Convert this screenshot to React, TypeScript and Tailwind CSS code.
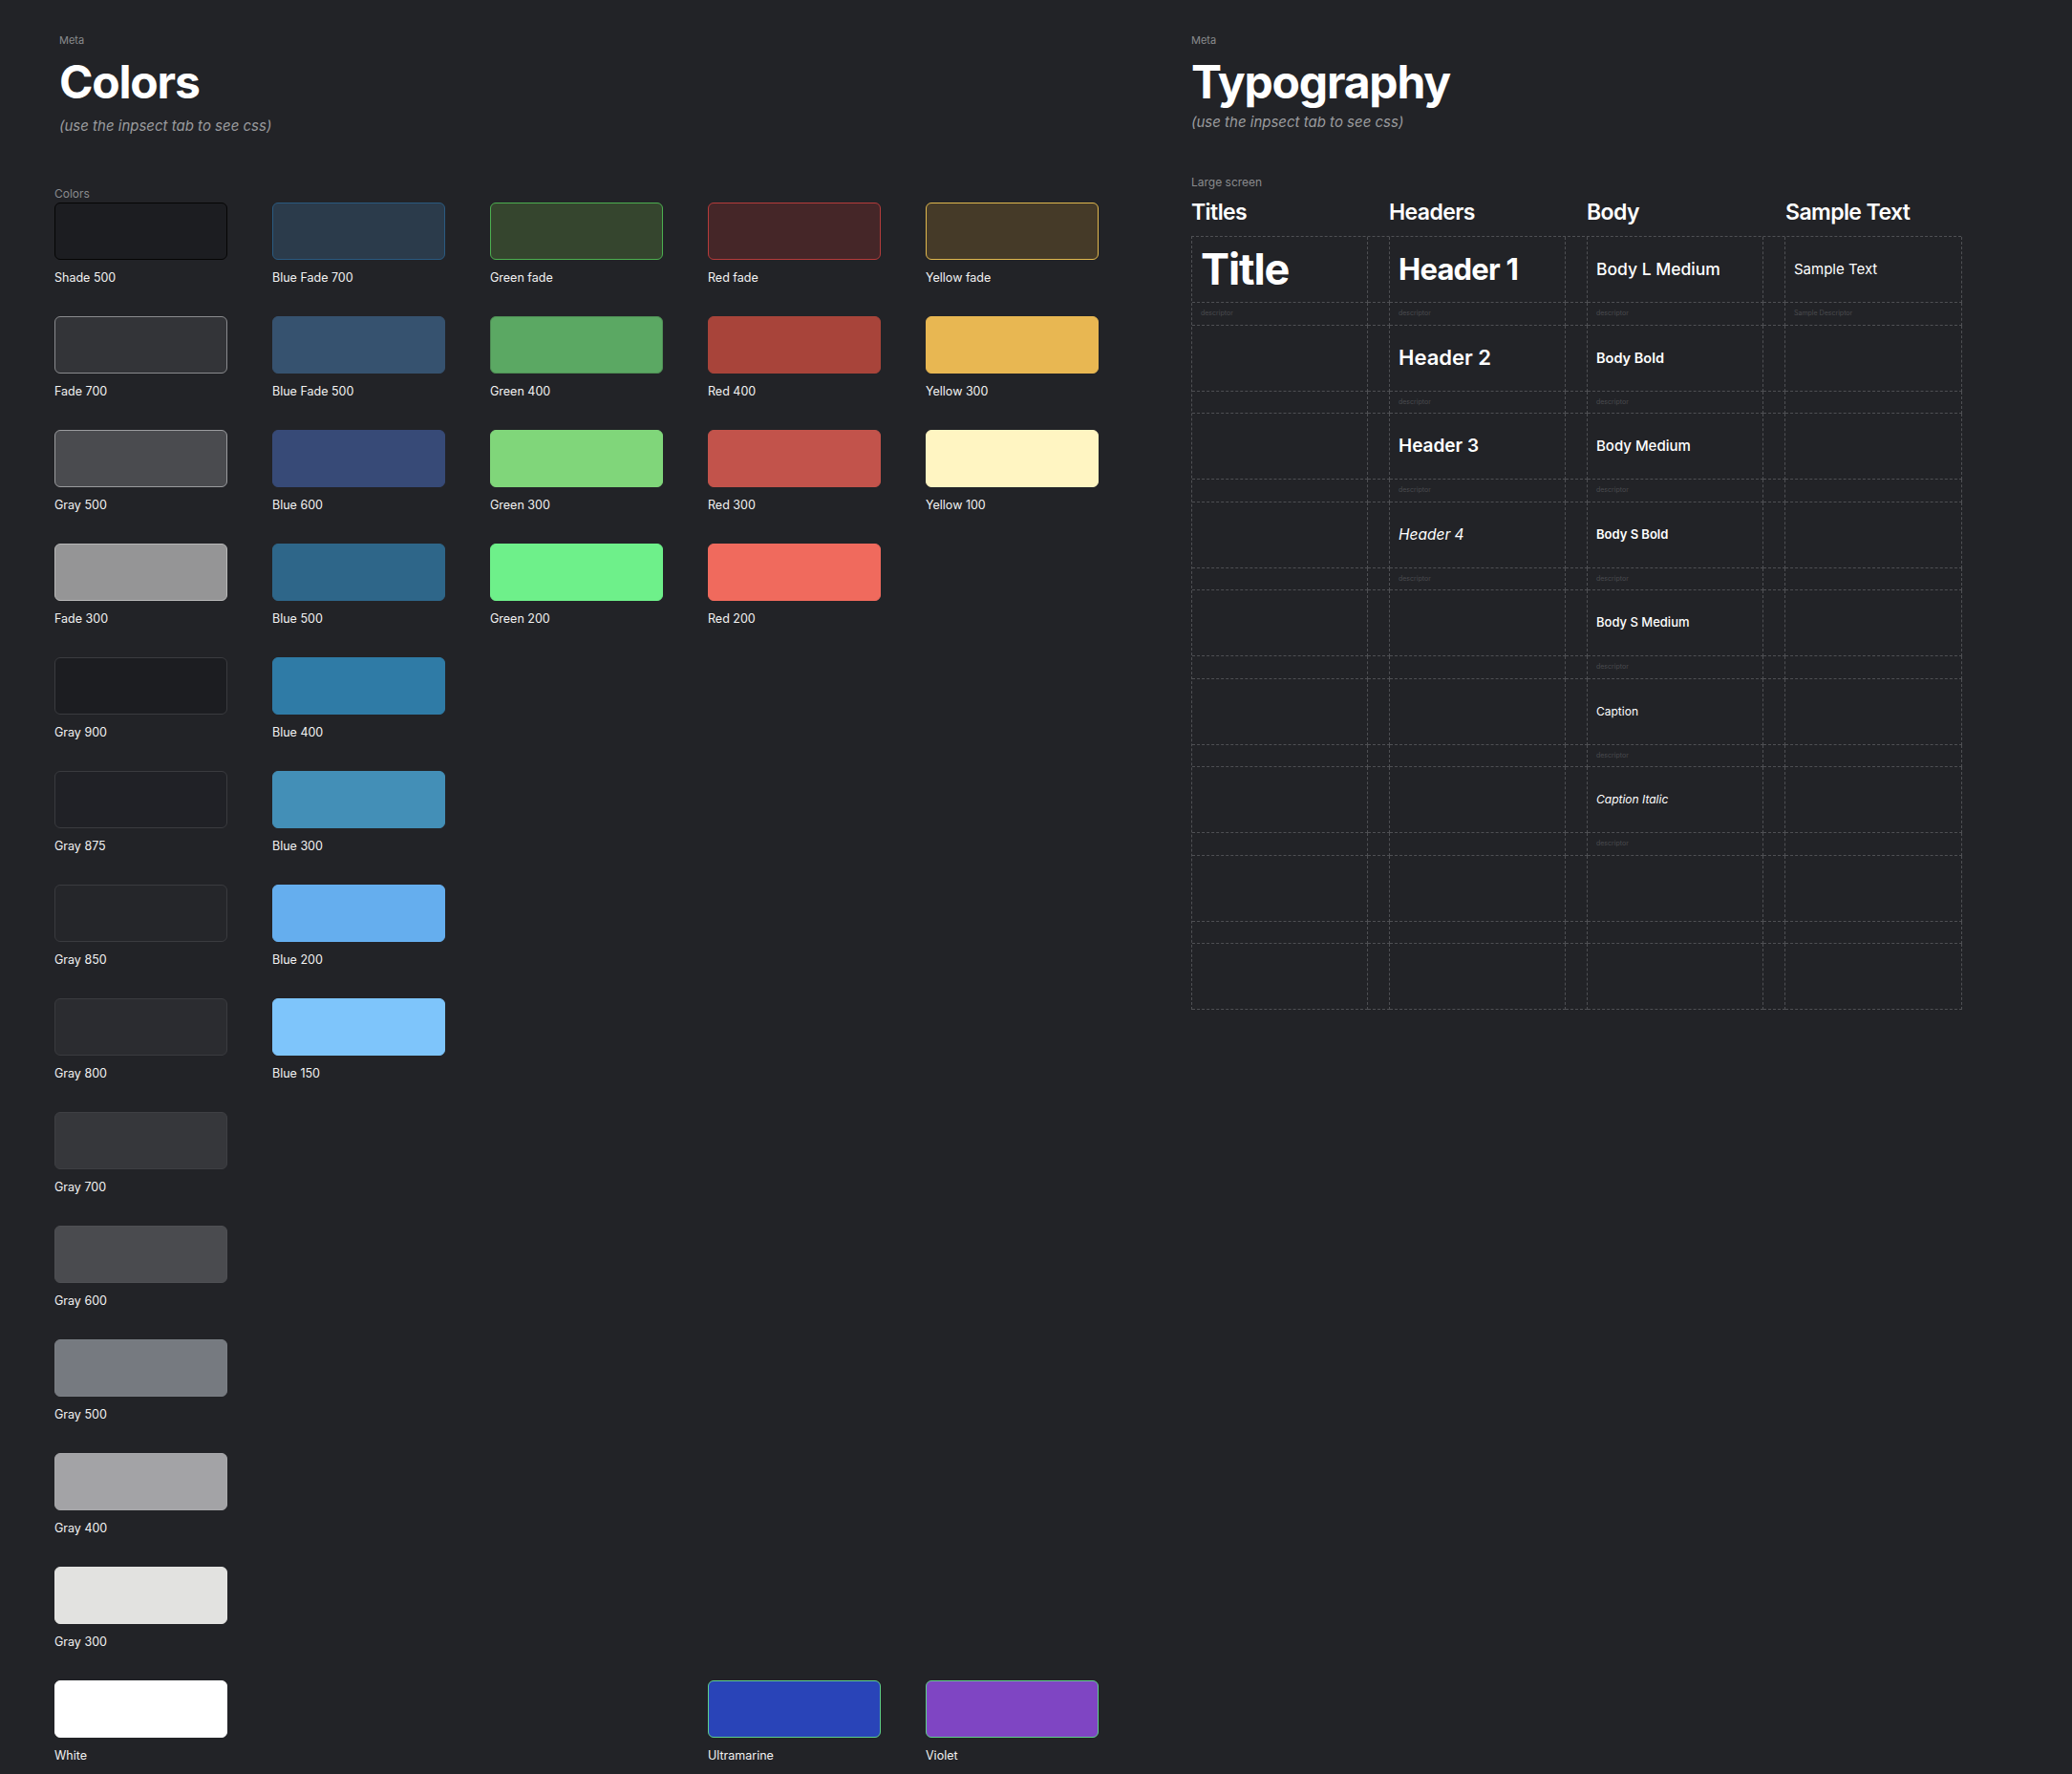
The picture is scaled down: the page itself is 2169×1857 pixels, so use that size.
import React from "react";

type S = { name: string; bg: string; border: string; glow?: boolean } | null;

const cols: S[][] = [
  [
    { name: "Shade 500", bg: "#1c1d21", border: "#050505" },
    { name: "Fade 700", bg: "#333438", border: "#8a8b8e" },
    { name: "Gray 500", bg: "#4a4b4f", border: "#9a9b9e" },
    { name: "Fade 300", bg: "#959596", border: "#b8b8b8" },
    { name: "Gray 900", bg: "#1c1d21", border: "#3a3b3f" },
    { name: "Gray 875", bg: "#202126", border: "#3a3b3f" },
    { name: "Gray 850", bg: "#25262a", border: "#3a3b3f" },
    { name: "Gray 800", bg: "#2b2c30", border: "#3a3b3f" },
    { name: "Gray 700", bg: "#36373b", border: "#3e3f43" },
    { name: "Gray 600", bg: "#4a4b4f", border: "#4e4f53" },
    { name: "Gray 500", bg: "#767a80", border: "#7a7e84" },
    { name: "Gray 400", bg: "#a3a3a6", border: "#a8a8ab" },
    { name: "Gray 300", bg: "#e2e2e0", border: "#e4e4e2" },
    { name: "White", bg: "#ffffff", border: "#ffffff" },
  ],
  [
    { name: "Blue Fade 700", bg: "#2b3b4b", border: "#2a5a80" },
    { name: "Blue Fade 500", bg: "#36526f", border: "#36526f" },
    { name: "Blue 600", bg: "#374a77", border: "#374a77" },
    { name: "Blue 500", bg: "#2e6689", border: "#2e6689" },
    { name: "Blue 400", bg: "#2f7ba6", border: "#2f7ba6" },
    { name: "Blue 300", bg: "#438fb7", border: "#438fb7" },
    { name: "Blue 200", bg: "#65aeee", border: "#65aeee" },
    { name: "Blue 150", bg: "#7ec5fb", border: "#7ec5fb" },
  ],
  [
    { name: "Green fade", bg: "#35452e", border: "#4caf50" },
    { name: "Green 400", bg: "#5ba863", border: "#4f8f55" },
    { name: "Green 300", bg: "#80d67a", border: "#80d67a" },
    { name: "Green 200", bg: "#6ef08a", border: "#6ef08a" },
  ],
  [
    { name: "Red fade", bg: "#452628", border: "#b53b3b" },
    { name: "Red 400", bg: "#a8443a", border: "#a8443a" },
    { name: "Red 300", bg: "#c2534b", border: "#c2534b" },
    { name: "Red 200", bg: "#f06a5d", border: "#f06a5d" },
    null, null, null, null, null, null, null, null, null,
    { name: "Ultramarine", bg: "#2944b8", border: "#5fd08a", glow: true },
  ],
  [
    { name: "Yellow fade", bg: "#453a28", border: "#e0b84e" },
    { name: "Yellow 300", bg: "#e8b752", border: "#e8b752" },
    { name: "Yellow 100", bg: "#fff5c2", border: "#fff5c2" },
    null, null, null, null, null, null, null, null, null, null,
    { name: "Violet", bg: "#7f45c3", border: "#5fd08a", glow: true },
  ],
];

const font = { fontFamily: "Inter, 'Noto Sans', sans-serif" };

function Swatch({ s }: { s: S }) {
  if (!s) return <div className="h-[119px]" />;
  return (
    <div className="h-[119px]">
      <div
        className="w-[181px] h-[60px] rounded-[6px] border-[1.5px]"
        style={{ background: s.bg, borderColor: s.border }}
      />
      <div className="mt-[13px] text-[12.5px] text-[#f2f2f2] leading-none">{s.name}</div>
    </div>
  );
}

const rows: [string, string, string, string][] = [
  ["Title", "Header 1", "Body L Medium", "Sample Text"],
  ["", "Header 2", "Body Bold", ""],
  ["", "Header 3", "Body Medium", ""],
  ["", "Header 4", "Body S Bold", ""],
  ["", "", "Body S Medium", ""],
  ["", "", "Caption", ""],
  ["", "", "Caption Italic", ""],
  ["", "", "", ""],
  ["", "", "", ""],
];

const styleMap: Record<string, string> = {
  Title: "text-[45px] font-bold tracking-tight",
  "Header 1": "text-[31px] font-bold tracking-tight",
  "Header 2": "text-[22px] font-semibold",
  "Header 3": "text-[19px] font-semibold",
  "Header 4": "text-[15.5px] italic",
  "Body L Medium": "text-[17.5px] font-medium",
  "Body Bold": "text-[14.5px] font-semibold",
  "Body Medium": "text-[15px] font-medium",
  "Body S Bold": "text-[13px] font-semibold",
  "Body S Medium": "text-[13px] font-medium",
  Caption: "text-[12px]",
  "Caption Italic": "text-[12px] italic",
  "Sample Text": "text-[15px]",
};

const cell = "border-r border-b border-dashed border-[#4e4f53]";

export default function App() {
  return (
    <div className="w-[2169px] h-[1857px] bg-[#222327] text-white flex" style={font}>
      <div className="w-[1247px] pl-[57px] pt-[37px]">
        <div className="pl-[5px]">
          <div className="text-[11px] text-[#8a8b8e] leading-none">Meta</div>
          <div className="text-[48px] font-bold leading-none mt-[14px] tracking-tight">Colors</div>
          <div className="text-[15px] italic text-[#9a9b9e] mt-[14px] leading-none">(use the inpsect tab to see css)</div>
        </div>
        <div className="text-[12px] text-[#8a8b8e] mt-[58px] leading-none">Colors</div>
        <div className="flex gap-[47px] mt-[3px]">
          {cols.map((c, i) => (
            <div key={i} className="flex flex-col w-[181px]">
              {c.map((s, j) => (
                <Swatch key={j} s={s} />
              ))}
            </div>
          ))}
        </div>
      </div>
      <div className="pt-[37px]">
        <div className="text-[11px] text-[#8a8b8e] leading-none">Meta</div>
        <div className="text-[48px] font-bold leading-none mt-[14px] tracking-tight">Typography</div>
        <div className="text-[15px] italic text-[#9a9b9e] mt-[10px] leading-none">(use the inpsect tab to see css)</div>
        <div className="text-[12px] text-[#8a8b8e] mt-[50px] leading-none">Large screen</div>
        <div className="grid grid-cols-[207px_207px_208px_184px] mt-[14px] text-[23px] font-semibold leading-none tracking-tight">
          <div>Titles</div>
          <div>Headers</div>
          <div>Body</div>
          <div>Sample Text</div>
        </div>
        <div className="mt-[13px] w-[806px] border-l border-t border-dashed border-[#4e4f53] grid grid-cols-[184px_23px_184px_23px_184px_23px_185px]">
          {rows.map((r, i) => (
            <React.Fragment key={i}>
              {r.map((t, k) => (
                <React.Fragment key={k}>
                  <div className={`${cell} h-[69px] flex items-center pl-[9px] whitespace-nowrap ${styleMap[t] ?? ""}`}>
                    {t}
                  </div>
                  {k < 3 && <div className={`${cell} h-[69px]`} />}
                </React.Fragment>
              ))}
              {i < 8 &&
                r.map((t, k) => (
                  <React.Fragment key={"d" + k}>
                    <div className={`${cell} h-[23.5px] flex items-center pl-[9px] text-[7px] text-[#4a4b4f]`}>
                      {t ? (k === 3 ? "Sample Descriptor" : "descriptor") : ""}
                    </div>
                    {k < 3 && <div className={`${cell} h-[23.5px]`} />}
                  </React.Fragment>
                ))}
            </React.Fragment>
          ))}
        </div>
      </div>
    </div>
  );
}
